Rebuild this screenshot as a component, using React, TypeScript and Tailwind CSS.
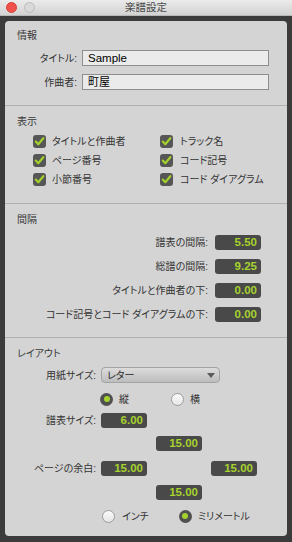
import React from "react";

const FONT = "font-['Liberation_Sans','Noto_Sans_CJK_JP',sans-serif]";

function Check() {
  return (
    <div className="w-[13px] h-[13px] rounded-[3px] bg-[#565656] flex items-center justify-center shrink-0">
      <svg width="11" height="11" viewBox="0 0 11 11">
        <path d="M1.8 5.6 L4.3 8.3 L9.3 2.2" fill="none" stroke="#a2d12c" strokeWidth="2.2" strokeLinecap="round" strokeLinejoin="round" />
      </svg>
    </div>
  );
}

function Radio({ on }: { on?: boolean }) {
  return on ? (
    <div className="w-[13px] h-[13px] rounded-full bg-[#505050] flex items-center justify-center shrink-0">
      <div className="w-[6px] h-[6px] rounded-full bg-[#a6d22e]" />
    </div>
  ) : (
    <div className="w-[13px] h-[13px] rounded-full bg-gradient-to-b from-[#fafafa] to-[#e6e6e6] border border-[#9c9c9c] shrink-0" />
  );
}

function Val({ v }: { v: string }) {
  return (
    <div className="w-[46px] h-[15px] rounded-[3px] bg-[#494949] text-[#a6d22e] text-[11.5px] font-bold leading-[15px] text-right pr-[4px] shrink-0">
      {v}
    </div>
  );
}

function Header({ t }: { t: string }) {
  return <div className="h-[14px] leading-[14px] pl-[12px] text-[#3a3a3a]">{t}</div>;
}

export default function App() {
  return (
    <div className={`w-[292px] h-[542px] bg-[#3b3b3b] flex flex-col text-[10px] text-[#333333] ${FONT} [font-feature-settings:'palt']`}>
      <div className="relative h-[16px] bg-gradient-to-b from-[#ebebeb] to-[#d2d2d2] border-b border-[#b8b8b8] flex items-center">
        <div className="absolute left-[6px] top-[1.5px] w-[11px] h-[11px] rounded-full bg-[#f0514a] border border-[#d6403a]" />
        <div className="absolute left-[24px] top-[1.5px] w-[11px] h-[11px] rounded-full bg-[#d9d9d9] border border-[#bdbdbd]" />
        <div className="absolute inset-x-0 top-0 h-[15px] leading-[15px] text-center text-[10.5px] text-[#4a4a4a]">楽譜設定</div>
      </div>
      <div className="mx-[5px] mt-[5px] h-[515px] rounded-[4px] bg-[#d4d4d4] flex flex-col">
        {/* 情報 */}
        <div className="h-[84px] pt-[8px] flex flex-col">
          <Header t="情報" />
          <div className="mt-[7px] h-[16px] flex items-center">
            <div className="w-[72px] text-right">タイトル:</div>
            <div className="ml-[5px] w-[187px] h-[16px] bg-[#ebebeb] border border-[#8e8e8e] pl-[5px] leading-[14px] text-[11.5px] text-black">Sample</div>
          </div>
          <div className="mt-[8px] h-[16px] flex items-center">
            <div className="w-[72px] text-right">作曲者:</div>
            <div className="ml-[5px] w-[187px] h-[16px] bg-[#ebebeb] border border-[#8e8e8e] pl-[5px] leading-[14px] text-[11px] text-black">町屋</div>
          </div>
        </div>
        {/* 表示 */}
        <div className="h-[98px] border-t border-[#b0b0b0] pt-[9px] flex flex-col">
          <Header t="表示" />
          <div className="mt-[3px] grid grid-cols-[127px_1fr] pl-[28px]">
            {[
              ["タイトルと作曲者", "トラック名"],
              ["ページ番号", "コード記号"],
              ["小節番号", "コード ダイアグラム"],
            ].map(([a, b]) => (
              <React.Fragment key={a}>
                <div className="h-[19px] flex items-center gap-[6px]">
                  <Check />
                  <span>{a}</span>
                </div>
                <div className="h-[19px] flex items-center gap-[7px]">
                  <Check />
                  <span>{b}</span>
                </div>
              </React.Fragment>
            ))}
          </div>
        </div>
        {/* 間隔 */}
        <div className="h-[134px] border-t border-[#b0b0b0] pt-[9px] flex flex-col">
          <Header t="間隔" />
          <div className="mt-[3px] flex flex-col">
            {[
              ["譜表の間隔:", "5.50"],
              ["総譜の間隔:", "9.25"],
              ["タイトルと作曲者の下:", "0.00"],
              ["コード記号とコード ダイアグラムの下:", "0.00"],
            ].map(([l, v]) => (
              <div key={l} className="h-[24px] flex items-center">
                <div className="w-[203px] text-right">{l}</div>
                <div className="ml-[7px]">
                  <Val v={v} />
                </div>
              </div>
            ))}
          </div>
        </div>
        {/* レイアウト */}
        <div className="flex-1 border-t border-[#b0b0b0] pt-[9px] flex flex-col">
          <Header t="レイアウト" />
          <div className="mt-[6px] h-[16px] flex items-center">
            <div className="w-[91px] text-right">用紙サイズ:</div>
            <div className="ml-[5px] w-[119px] h-[16px] rounded-[4px] bg-gradient-to-b from-[#dcdcdc] to-[#bdbdbd] border border-[#a3a3a3] flex items-center justify-between pl-[5px] pr-[4px]">
              <span className="text-[#2a2a2a]">レター</span>
              <svg width="8" height="5" viewBox="0 0 8 5">
                <path d="M0 0 H8 L4 5 Z" fill="#5a5a5a" />
              </svg>
            </div>
          </div>
          <div className="mt-[8px] h-[16px] flex items-center">
            <div className="ml-[95px] flex items-center gap-[6px]">
              <Radio on />
              <span>縦</span>
            </div>
            <div className="ml-[42px] flex items-center gap-[6px]">
              <Radio />
              <span>横</span>
            </div>
          </div>
          <div className="mt-[6px] h-[15px] flex items-center">
            <div className="w-[91px] text-right">譜表サイズ:</div>
            <div className="ml-[5px]">
              <Val v="6.00" />
            </div>
          </div>
          <div className="mt-[8px] h-[15px] flex items-center pl-[151px]">
            <Val v="15.00" />
          </div>
          <div className="mt-[10px] h-[15px] flex items-center">
            <div className="w-[91px] text-right">ページの余白:</div>
            <div className="ml-[5px]">
              <Val v="15.00" />
            </div>
            <div className="ml-[64px]">
              <Val v="15.00" />
            </div>
          </div>
          <div className="mt-[9px] h-[15px] flex items-center pl-[151px]">
            <Val v="15.00" />
          </div>
          <div className="mt-[8px] h-[16px] flex items-center">
            <div className="ml-[97px] flex items-center gap-[7px]">
              <Radio />
              <span>インチ</span>
            </div>
            <div className="ml-[30px] flex items-center gap-[6px]">
              <Radio on />
              <span>ミリメートル</span>
            </div>
          </div>
        </div>
      </div>
    </div>
  );
}
